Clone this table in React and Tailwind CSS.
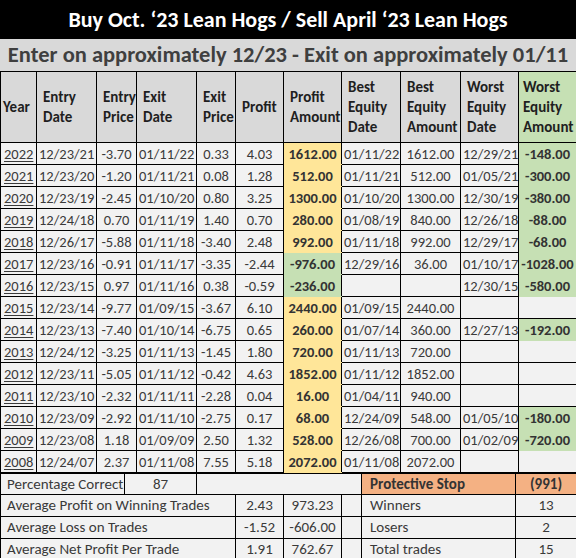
import React from "react";

const rows = [
  ["2022", "12/23/21", "-3.70", "01/11/22", "0.33", "4.03", "1612.00", "01/11/22", "1612.00", "12/29/21", "-148.00"],
  ["2021", "12/23/20", "-1.20", "01/11/21", "0.08", "1.28", "512.00", "01/11/21", "512.00", "01/05/21", "-300.00"],
  ["2020", "12/23/19", "-2.45", "01/10/20", "0.80", "3.25", "1300.00", "01/10/20", "1300.00", "12/30/19", "-380.00"],
  ["2019", "12/24/18", "0.70", "01/11/19", "1.40", "0.70", "280.00", "01/08/19", "840.00", "12/26/18", "-88.00"],
  ["2018", "12/26/17", "-5.88", "01/11/18", "-3.40", "2.48", "992.00", "01/11/18", "992.00", "12/29/17", "-68.00"],
  ["2017", "12/23/16", "-0.91", "01/11/17", "-3.35", "-2.44", "-976.00", "12/29/16", "36.00", "01/10/17", "-1028.00"],
  ["2016", "12/23/15", "0.97", "01/11/16", "0.38", "-0.59", "-236.00", "", "", "12/30/15", "-580.00"],
  ["2015", "12/23/14", "-9.77", "01/09/15", "-3.67", "6.10", "2440.00", "01/09/15", "2440.00", "", ""],
  ["2014", "12/23/13", "-7.40", "01/10/14", "-6.75", "0.65", "260.00", "01/07/14", "360.00", "12/27/13", "-192.00"],
  ["2013", "12/24/12", "-3.25", "01/11/13", "-1.45", "1.80", "720.00", "01/11/13", "720.00", "", ""],
  ["2012", "12/23/11", "-5.05", "01/11/12", "-0.42", "4.63", "1852.00", "01/11/12", "1852.00", "", ""],
  ["2011", "12/23/10", "-2.32", "01/11/11", "-2.28", "0.04", "16.00", "01/04/11", "940.00", "", ""],
  ["2010", "12/23/09", "-2.92", "01/11/10", "-2.75", "0.17", "68.00", "12/24/09", "548.00", "01/05/10", "-180.00"],
  ["2009", "12/23/08", "1.18", "01/09/09", "2.50", "1.32", "528.00", "12/26/08", "700.00", "01/02/09", "-720.00"],
  ["2008", "12/24/07", "2.37", "01/11/08", "7.55", "5.18", "2072.00", "01/11/08", "2072.00", "", ""],
];

const widths = [36, 60, 40, 60, 39, 48, 58, 59, 60, 58, 58];

const headers = [
  ["Year"],
  ["Entry", "Date"],
  ["Entry", "Price"],
  ["Exit", "Date"],
  ["Exit", "Price"],
  ["Profit"],
  ["Profit", "Amount"],
  ["Best", "Equity", "Date"],
  ["Best", "Equity", "Amount"],
  ["Worst", "Equity", "Date"],
  ["Worst", "Equity", "Amount"],
];

const font = { fontFamily: "Carlito, Lato, 'Liberation Sans', sans-serif" };

const gray = "border border-black bg-[#f2f2f2] whitespace-nowrap overflow-hidden p-0";
const yellow =
  "border-y border-y-[#ffe699] border-x border-x-black bg-[#ffe699] text-center font-bold whitespace-nowrap overflow-hidden p-0 text-[#333]";
const green =
  "border-y border-y-[#c6e0b4] border-x border-x-black bg-[#c6e0b4] text-center font-bold whitespace-nowrap overflow-hidden p-0 text-[#333]";

function DataRow({ r }) {
  return (
    <tr className="h-[22px] text-[14.5px] leading-[18px] text-[#3a3a3a]">
      <td className={gray + " pl-[3px] underline underline-offset-2"}>{r[0]}</td>
      <td className={gray + " pl-[2px]"}>{r[1]}</td>
      <td className={gray + " text-center"}>{r[2]}</td>
      <td className={gray + " pl-[2px]"}>{r[3]}</td>
      <td className={gray + " text-center"}>{r[4]}</td>
      <td className={gray + " text-center"}>{r[5]}</td>
      <td className={r[6].startsWith("-") ? green : yellow}>{r[6]}</td>
      <td className={gray + " pl-[2px]"}>{r[7]}</td>
      <td className={gray + " text-center"}>{r[8]}</td>
      <td className={gray + " pl-[2px]"}>{r[9]}</td>
      <td className={r[10] ? green : gray}>{r[10]}</td>
    </tr>
  );
}

export default function App() {
  return (
    <div className="w-[576px] h-[558px] overflow-hidden bg-white" style={font}>
      <div className="h-[39px] bg-black text-white font-bold text-[22px] flex items-center justify-center whitespace-nowrap">
        Buy Oct. ‘23 Lean Hogs / Sell April ‘23 Lean Hogs
      </div>
      <div className="h-[32px] bg-[#d9d9d9] text-[#3f3f3f] font-bold text-[22.5px] flex items-center justify-center whitespace-nowrap">
        Enter on approximately 12/23 - Exit on approximately 01/11
      </div>
      <table className="table-fixed border-collapse w-[576px]">
        <colgroup>
          {widths.map((w, i) => (
            <col key={i} style={{ width: w }} />
          ))}
        </colgroup>
        <thead>
          <tr className="h-[71px] text-[15px] text-[#1f1f1f] leading-[20px]">
            {headers.map((h, i) => (
              <th
                key={i}
                className={
                  i === 10
                    ? "border border-black bg-[#c6e0b4] text-left pl-[4px] pr-0 font-bold align-middle whitespace-nowrap overflow-hidden"
                    : i === 0
                    ? "border border-black bg-[#d9d9d9] text-left pl-[2px] pr-0 font-bold align-middle whitespace-nowrap overflow-hidden"
                    : "border border-black bg-[#d9d9d9] text-left pl-[6px] pr-0 font-bold align-middle whitespace-nowrap overflow-hidden"
                }
              >
                {h.map((line, j) => (
                  <div key={j}>{line}</div>
                ))}
              </th>
            ))}
          </tr>
        </thead>
        <tbody>
          {rows.map((r) => (
            <DataRow key={r[0]} r={r} />
          ))}
        </tbody>
      </table>
      <table className="table-fixed border-collapse w-[576px] text-[15px] leading-[17px] text-[#3a3a3a]">
        <colgroup>
          <col style={{ width: 124 }} />
          <col style={{ width: 72 }} />
          <col style={{ width: 39 }} />
          <col style={{ width: 48 }} />
          <col style={{ width: 58 }} />
          <col style={{ width: 20 }} />
          <col style={{ width: 154 }} />
          <col style={{ width: 61 }} />
        </colgroup>
        <tbody>
          <tr className="h-[21px]">
            <td className={gray + " pl-[6px]"}>Percentage Correct</td>
            <td className={gray + " text-center"}>87</td>
            <td colSpan={4} className={gray}></td>
            <td className="border border-black bg-[#f4b183] p-0 pl-[8px] font-bold text-[#333] whitespace-nowrap">Protective Stop</td>
            <td className="border border-black bg-[#f4b183] p-0 text-center font-bold text-[#333]">(991)</td>
          </tr>
          <tr className="h-[22px]">
            <td colSpan={3} className={gray + " pl-[6px]"}>Average Profit on Winning Trades</td>
            <td className={gray + " text-center"}>2.43</td>
            <td className={gray + " text-center"}>973.23</td>
            <td className={gray}></td>
            <td className={gray + " pl-[8px]"}>Winners</td>
            <td className={gray + " text-center"}>13</td>
          </tr>
          <tr className="h-[22px]">
            <td colSpan={3} className={gray + " pl-[6px]"}>Average Loss on Trades</td>
            <td className={gray + " text-center"}>-1.52</td>
            <td className={gray + " text-center"}>-606.00</td>
            <td className={gray}></td>
            <td className={gray + " pl-[8px]"}>Losers</td>
            <td className={gray + " text-center"}>2</td>
          </tr>
          <tr className="h-[21px]">
            <td colSpan={3} className={gray + " pl-[6px]"}>Average Net Profit Per Trade</td>
            <td className={gray + " text-center"}>1.91</td>
            <td className={gray + " text-center"}>762.67</td>
            <td className={gray}></td>
            <td className={gray + " pl-[8px]"}>Total trades</td>
            <td className={gray + " text-center"}>15</td>
          </tr>
        </tbody>
      </table>
    </div>
  );
}
